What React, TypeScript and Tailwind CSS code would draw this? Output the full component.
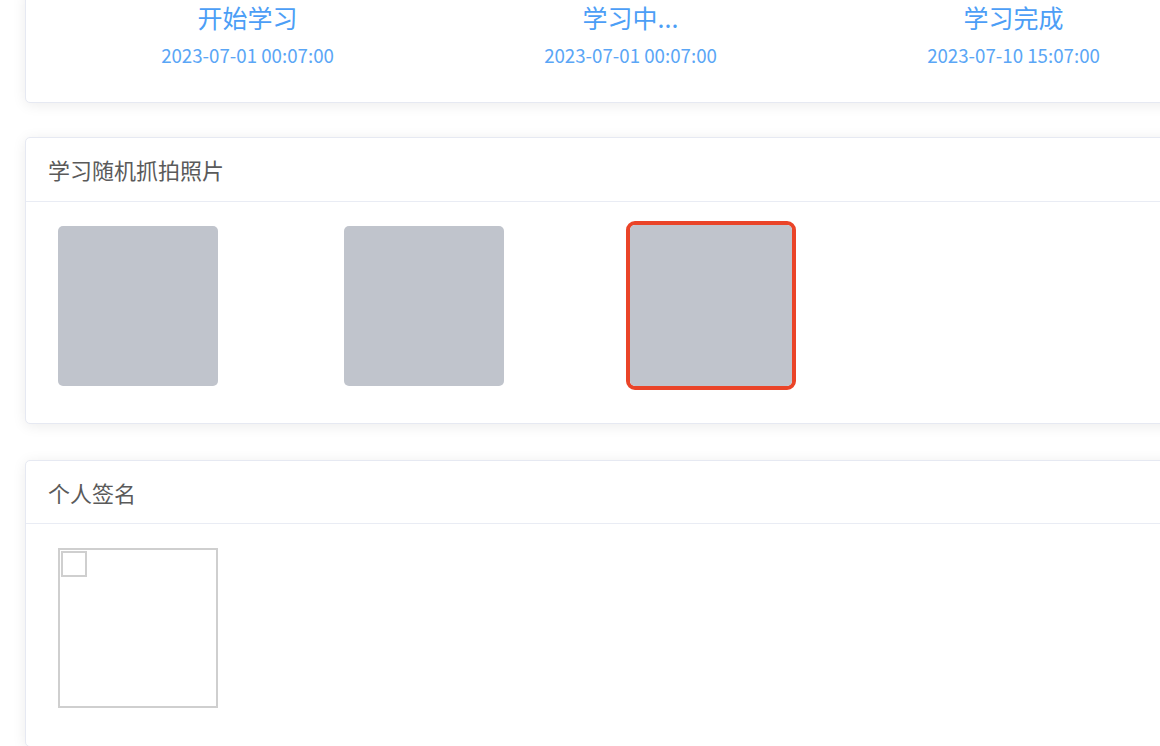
import React from "react";

const font = { fontFamily: '"Noto Sans CJK SC", "Noto Sans", sans-serif' };

function Step({ title, date }: { title: string; date: string }) {
  return (
    <div className="flex flex-1 flex-col items-center">
      <div className="text-[25px] leading-[32px] text-[#4c9ef6]">{title}</div>
      <div className="mt-[10px] text-[18.7px] leading-[24px] text-[#5aa6f6]">{date}</div>
    </div>
  );
}

function Photo({ highlight }: { highlight?: boolean }) {
  if (highlight) {
    return (
      <div className="-mb-[4px] -ml-[4px] -mt-[5px] h-[169px] w-[170px] rounded-[9px] border-[4px] border-[#ea4428]">
        <div className="h-full w-full rounded-[5px] bg-[#c0c4cc]" />
      </div>
    );
  }
  return <div className="h-[160px] w-[160px] rounded-[5px] bg-[#c0c4cc]" />;
}

export default function App() {
  return (
    <div className="h-[746px] w-[1160px] overflow-hidden bg-white" style={font}>
      <div className="w-[1236px] pl-[25px]">
        <div className="-mt-[10px] rounded-[5px] border border-[#e6e9f2] bg-white pt-[10px] shadow-[0_2px_14px_rgba(0,0,0,0.08)]">
          <div className="flex px-[30px] pb-[35px]">
            <Step title="开始学习" date="2023-07-01 00:07:00" />
            <Step title="学习中..." date="2023-07-01 00:07:00" />
            <Step title="学习完成" date="2023-07-10 15:07:00" />
          </div>
        </div>

        <div className="mt-[34px] rounded-[5px] border border-[#e6e9f2] bg-white shadow-[0_2px_14px_rgba(0,0,0,0.08)]">
          <div className="flex h-[64px] items-center border-b border-[#e9ecf4] pl-[22px] text-[22px] text-[#5a5a5a]">
            学习随机抓拍照片
          </div>
          <div className="flex gap-[126px] pb-[37px] pl-[32px] pt-[24px]">
            <Photo />
            <Photo />
            <Photo highlight />
          </div>
        </div>

        <div className="mt-[36px] rounded-[5px] border border-[#e6e9f2] bg-white shadow-[0_2px_14px_rgba(0,0,0,0.08)]">
          <div className="flex h-[63px] items-center border-b border-[#e9ecf4] pl-[22px] text-[22px] text-[#5a5a5a]">
            个人签名
          </div>
          <div className="pb-[38px] pl-[32px] pt-[24px]">
            <div className="h-[160px] w-[160px] border-2 border-[#cfcfcf] p-[1px]">
              <div className="h-[26px] w-[26px] border-2 border-[#cfcfcf]" />
            </div>
          </div>
        </div>
      </div>
    </div>
  );
}
